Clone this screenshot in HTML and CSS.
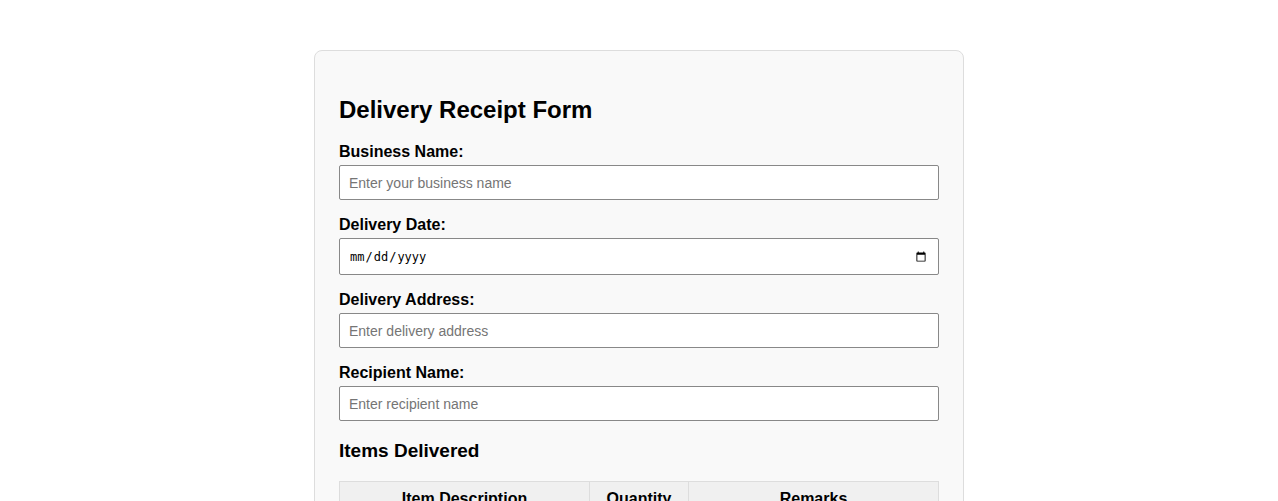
FILE: index.html
```html
<!DOCTYPE html>
<html lang="en">
<head>
  <meta charset="UTF-8" />
  <title>Delivery Receipt Form</title>
  <link rel="stylesheet" href="styles.css">
</head>
<body>
  <div class="container">
    <h2>Delivery Receipt Form</h2>
    <form>
      <div class="form-group">
        <label for="businessName">Business Name:</label>
        <input type="text" id="businessName" placeholder="Enter your business name" />
      </div>
      <div class="form-group">
        <label for="deliveryDate">Delivery Date:</label>
        <input type="date" id="deliveryDate" />
      </div>
      <div class="form-group">
        <label for="deliveryAddress">Delivery Address:</label>
        <input type="text" id="deliveryAddress" placeholder="Enter delivery address" />
      </div>
      <div class="form-group">
        <label for="recipientName">Recipient Name:</label>
        <input type="text" id="recipientName" placeholder="Enter recipient name" />
      </div>

      <h3>Items Delivered</h3>
      <table>
        <thead>
          <tr>
            <th class="col-desc">Item Description</th>
            <th class="col-qty">Quantity</th>
            <th>Remarks</th>
          </tr>
        </thead>
        <tbody>
          <tr>
            <td><input type="text" placeholder="Item name" /></td>
            <td><input type="number" min="0" /></td>
            <td><input type="text" placeholder="Remarks" /></td>
          </tr>
        </tbody>
      </table>
    </form>
  </div>
</body>
</html>
```

FILE: styles.css
```css
body {
  font-family: "Liberation Sans", Arial, sans-serif;
  margin: 0;
  padding: 50px 0;
  background-color: #fff;
}
.container {
  width: 600px;
  margin: 0 auto;
  padding: 24px;
  background: #f9f9f9;
  border: 1px solid #ddd;
  border-radius: 8px;
}
h2 {
  font-size: 24px;
  margin: 21px 0 19px;
}
h3 {
  font-size: 19px;
  margin: 19px 0 19px;
}
.form-group {
  margin-bottom: 16px;
}
label {
  display: block;
  font-weight: bold;
  font-size: 16px;
  margin-bottom: 4px;
}
input[type="text"],
input[type="date"],
input[type="number"] {
  box-sizing: border-box;
  width: 100%;
  height: 35px;
  padding: 8px 9px;
  font-size: 14px;
  font-family: "Liberation Sans", Arial, sans-serif;
  border: 1px solid #888;
  border-radius: 2px;
  background: #fff;
}
input[type="date"] {
  height: 37px;
  font-family: "DejaVu Sans Mono", monospace;
  font-size: 12px;
}
table {
  width: 100%;
  border-collapse: collapse;
}
th, td {
  border: 1px solid #ddd;
  padding: 8px;
  text-align: center;
}
th {
  background: #f0f0f0;
  font-size: 16px;
}
.col-desc {
  width: 233px;
}
.col-qty {
  width: 82px;
}
```
